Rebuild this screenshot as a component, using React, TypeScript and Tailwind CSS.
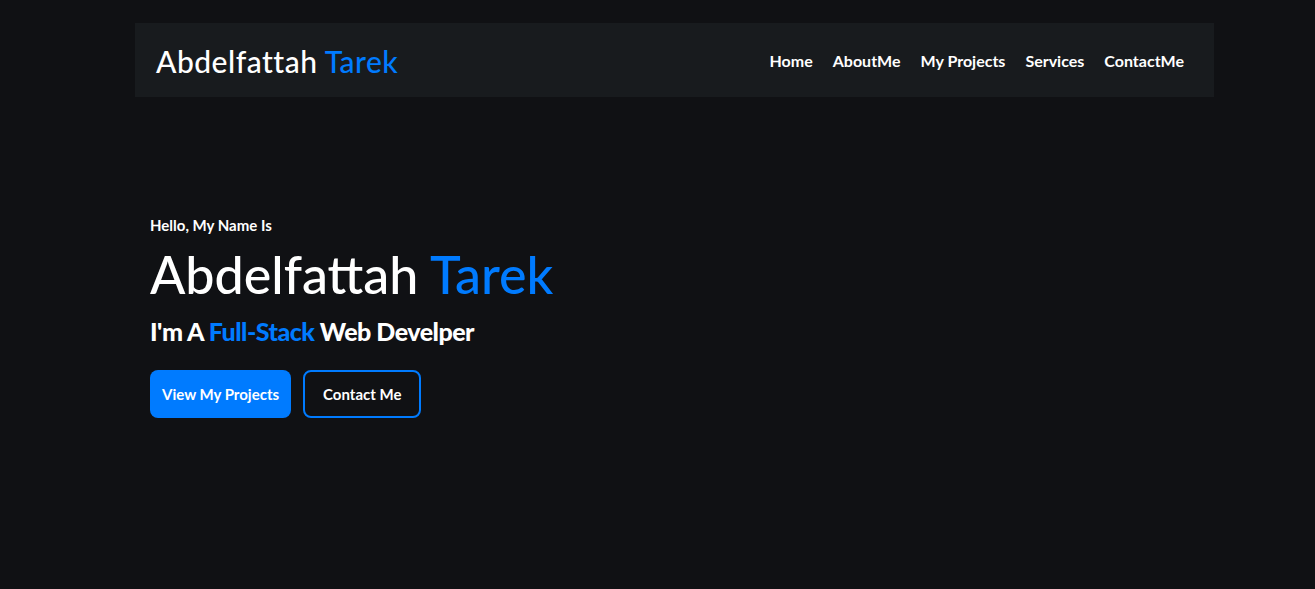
export default function App() {
  const links = ["Home", "AboutMe", "My Projects", "Services", "ContactMe"];

  return (
    <div
      className="min-h-[589px] bg-[#101114] text-white pt-[23px]"
      style={{ fontFamily: "Lato, 'Noto Sans', sans-serif" }}
    >
      <nav className="ml-[135px] w-[1079px] h-[74px] bg-[#181b1e] flex items-center justify-between pl-[21px] pr-[30px]">
        <a href="#" className="text-[30px] font-medium tracking-[0.5px] leading-[36px] mt-[2px]">
          Abdelfattah <span className="text-[#007bff]">Tarek</span>
        </a>
        <ul className="flex items-center gap-[20px] text-[16px] font-bold mt-[2px]">
          {links.map((l) => (
            <li key={l}>
              <a href="#">{l}</a>
            </li>
          ))}
        </ul>
      </nav>

      <section className="ml-[150px] pt-[118px]">
        <p className="text-[15px] font-bold leading-[20px]">Hello, My Name Is</p>
        <h1 className="text-[52px] font-medium leading-[64px] mt-[7px]">
          Abdelfattah <span className="text-[#007bff]">Tarek</span>
        </h1>
        <h2 className="text-[25px] font-black leading-[34px] tracking-[-0.5px] mt-[8px]">
          I'm A <span className="text-[#007bff]">Full-Stack</span> Web Develper
        </h2>
        <div className="flex gap-[12px] mt-[22px]">
          <button className="h-[48px] px-[12px] rounded-[8px] bg-[#007bff] text-[15px] font-bold">
            View My Projects
          </button>
          <button className="h-[48px] px-[18px] rounded-[8px] border-2 border-[#007bff] text-[15px] font-bold">
            Contact Me
          </button>
        </div>
      </section>
    </div>
  );
}
